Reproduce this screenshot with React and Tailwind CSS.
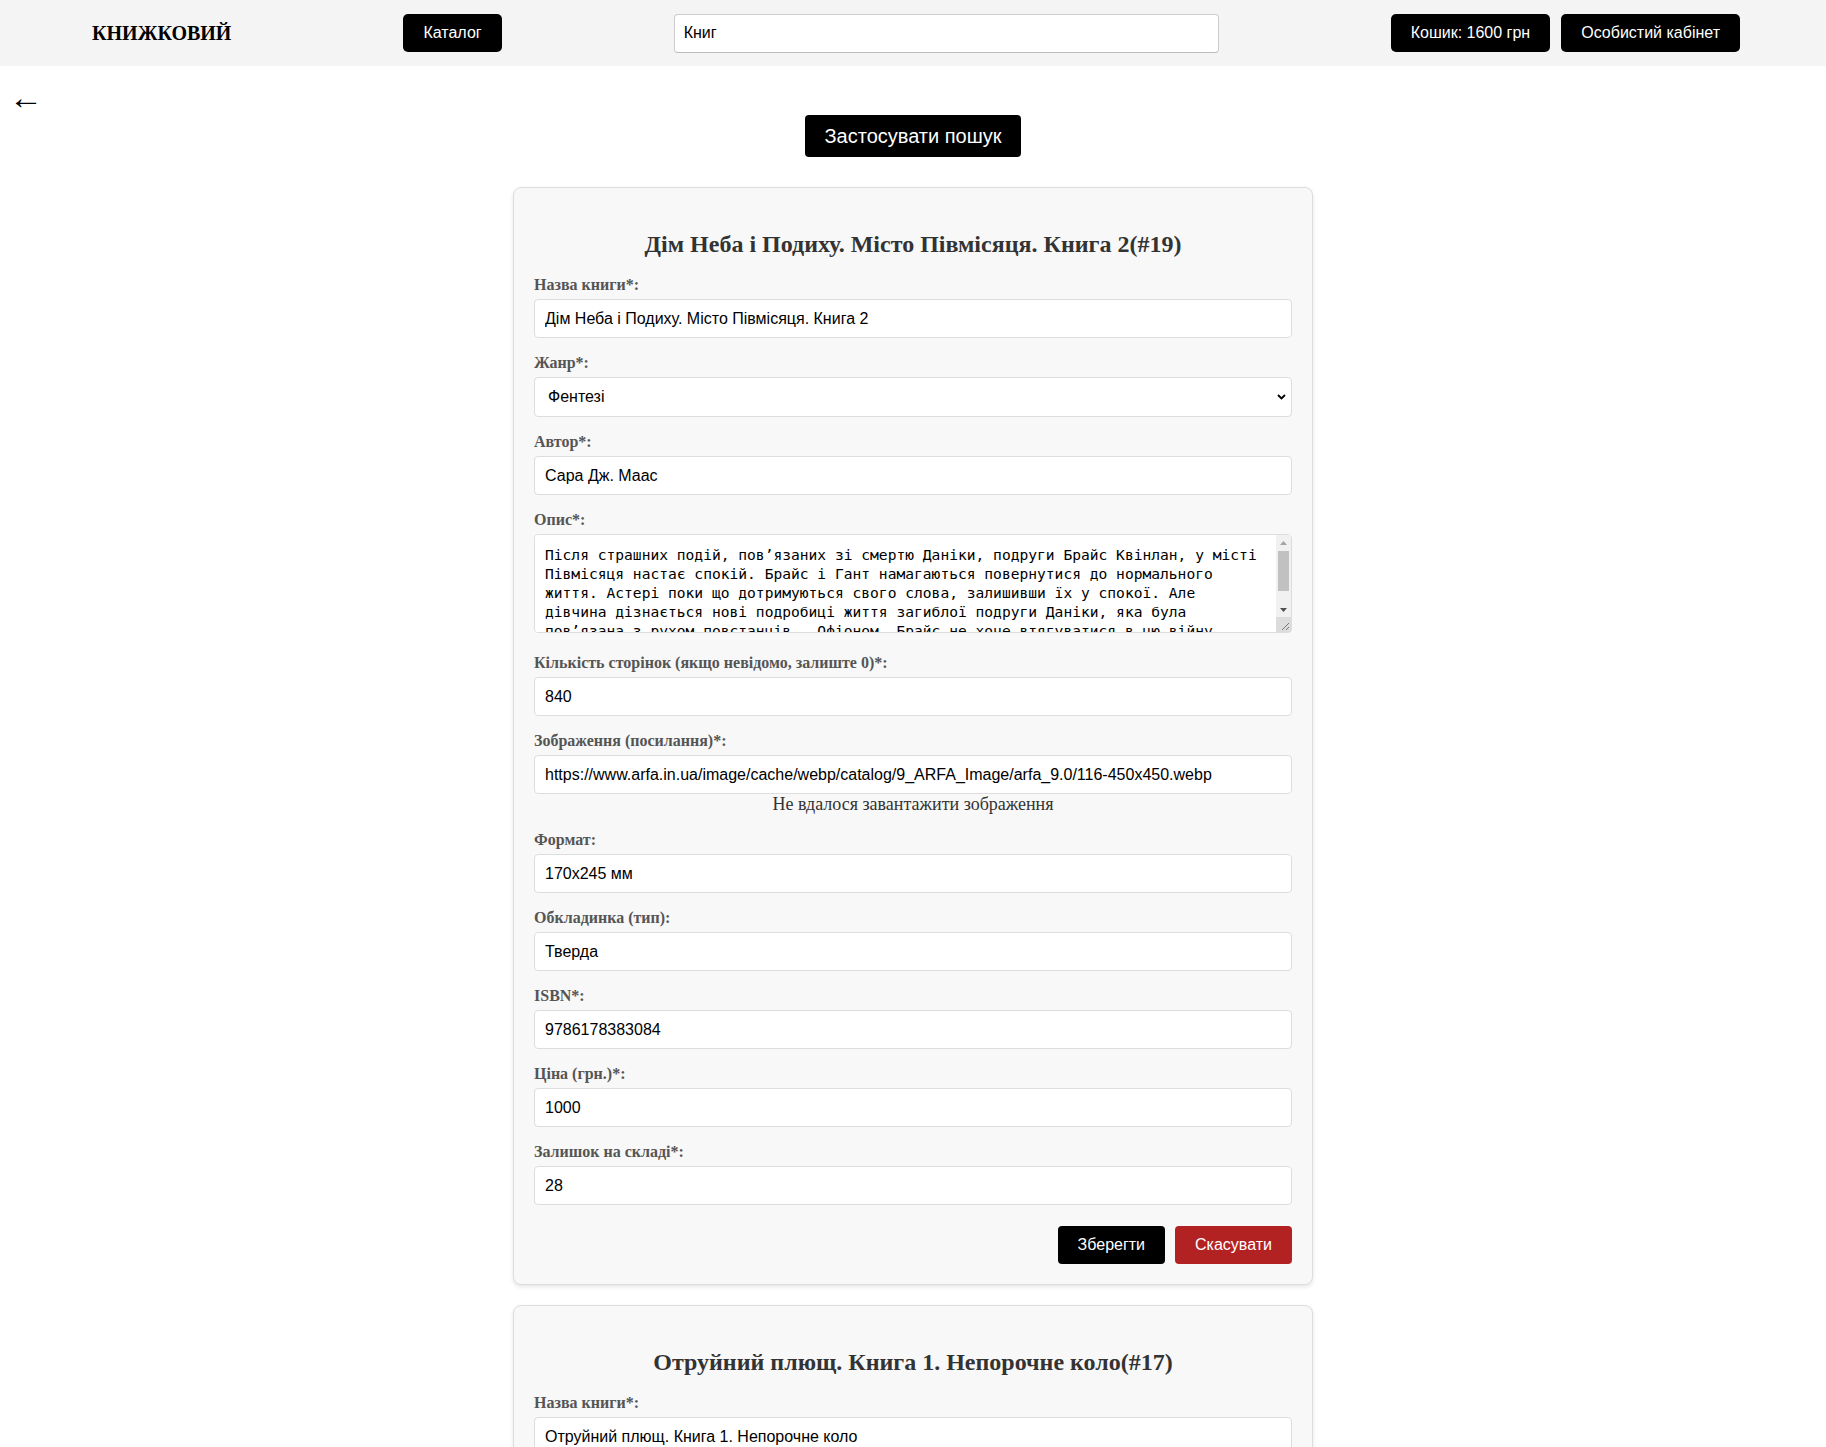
import { useState } from 'react';

const serif = "font-['Liberation_Serif','Times_New_Roman',serif]";
const sans = "font-['Liberation_Sans',Arial,sans-serif]";

const genres = ['Фентезі', 'Детектив', 'Роман', 'Трилер', 'Класика', 'Наукова фантастика'];

const books = [
  {
    id: 19,
    title: 'Дім Неба і Подиху. Місто Півмісяця. Книга 2',
    genre: 'Фентезі',
    author: 'Сара Дж. Маас',
    description:
      'Після страшних подій, пов’язаних зі смертю Даніки, подруги Брайс Квінлан, у місті Півмісяця настає спокій. Брайс і Гант намагаються повернутися до нормального життя. Астері поки що дотримуються свого слова, залишивши їх у спокої. Але дівчина дізнається нові подробиці життя загиблої подруги Даніки, яка була пов’язана з рухом повстанців — Офіоном. Брайс не хоче втягуватися в цю війну, проте минуле подруги не відпускає її, а місто знову опиняється на межі хаосу.',
    pages: '840',
    image: 'https://www.arfa.in.ua/image/cache/webp/catalog/9_ARFA_Image/arfa_9.0/116-450x450.webp',
    format: '170x245 мм',
    cover: 'Тверда',
    isbn: '9786178383084',
    price: '1000',
    stock: '28',
  },
  {
    id: 17,
    title: 'Отруйний плющ. Книга 1. Непорочне коло',
    genre: 'Роман',
    author: 'Л. Дж. Шен',
    description:
      'Перша книга циклу «Непорочне коло». Історія про кохання, помсту та таємниці, які ховаються за фасадом елітної школи.',
    pages: '416',
    image: 'https://www.arfa.in.ua/image/cache/webp/catalog/9_ARFA_Image/arfa_9.0/101-450x450.webp',
    format: '135x205 мм',
    cover: 'Тверда',
    isbn: '9786178383015',
    price: '600',
    stock: '12',
  },
];

const inputCls = `block w-full h-[39px] px-[10px] bg-white border border-[#ddd] rounded-[4px] text-[16px] text-black outline-none ${sans}`;
const labelCls = `block mb-[5px] text-[16px] leading-[18px] font-bold text-[#555] ${serif}`;

function Field({ label, children, last }) {
  return (
    <div className={last ? 'mb-[21px]' : 'mb-4'}>
      <label className={labelCls}>{label}</label>
      {children}
    </div>
  );
}

// classic scrollbar drawn over the textarea's right edge
function FakeScrollbar() {
  return (
    <div className="absolute top-px right-px bottom-px w-[15px] flex flex-col pointer-events-none">
      <div className="flex flex-col flex-1 bg-[#f1f1f1]">
        <div className="h-[15px] flex items-center justify-center">
          <svg width="7" height="4" viewBox="0 0 7 4">
            <path d="M0 4L3.5 0L7 4Z" fill="#a3a3a3" />
          </svg>
        </div>
        <div className="flex-1 px-[2px] pt-px">
          <div className="h-[40px] bg-[#c1c1c1]" />
        </div>
        <div className="h-[15px] flex items-center justify-center">
          <svg width="7" height="4" viewBox="0 0 7 4">
            <path d="M0 0L3.5 4L7 0Z" fill="#505050" />
          </svg>
        </div>
      </div>
      <div className="h-[15px] bg-[#dcdcdc] flex items-end justify-end">
        <svg width="15" height="15" viewBox="0 0 15 15">
          <path d="M13 6L6 13M13 10L10 13" stroke="#777" strokeWidth="1" />
        </svg>
      </div>
    </div>
  );
}

function BookCard({ book }) {
  const [form, setForm] = useState(book);
  const set = (key) => (e) => setForm({ ...form, [key]: e.target.value });

  return (
    <div className="w-[800px] mx-auto mb-5 p-5 bg-[#f8f8f8] border border-[#ddd] rounded-lg shadow-[0_2px_4px_rgba(0,0,0,0.1)]">
      <h2 className={`mt-[22px] mb-[18px] text-center text-[24px] leading-[28px] font-bold text-[#333] ${serif}`}>
        {book.title}(#{book.id})
      </h2>

      <Field label="Назва книги*:">
        <input className={inputCls} value={form.title} onChange={set('title')} />
      </Field>

      <Field label="Жанр*:">
        <div className="relative">
          <select
            className={`block w-full h-[40px] pl-[13px] pr-8 bg-white border border-[#ddd] rounded-[4px] text-[16px] text-black outline-none appearance-none ${sans}`}
            value={form.genre}
            onChange={set('genre')}
          >
            {genres.map((g) => (
              <option key={g}>{g}</option>
            ))}
          </select>
          <svg className="absolute right-[6px] top-[17px] pointer-events-none" width="9" height="6" viewBox="0 0 9 6">
            <path d="M1 1l3.5 3.5L8 1" fill="none" stroke="#000" strokeWidth="1.8" />
          </svg>
        </div>
      </Field>

      <Field label="Автор*:">
        <input className={inputCls} value={form.author} onChange={set('author')} />
      </Field>

      <Field label="Опис*:" last>
        <div className="relative">
          <textarea
            className="block w-full h-[99px] py-[10px] pl-[10px] pr-[28px] bg-white border border-[#ddd] rounded-[4px] text-[14.6px] leading-[19px] text-black outline-none resize-none overflow-y-auto [scrollbar-width:none] font-['DejaVu_Sans_Mono',monospace]"
            value={form.description}
            onChange={set('description')}
          />
          <FakeScrollbar />
        </div>
      </Field>

      <Field label="Кількість сторінок (якщо невідомо, залиште 0)*:">
        <input className={inputCls} value={form.pages} onChange={set('pages')} />
      </Field>

      <div className="mb-4">
        <label className={labelCls}>Зображення (посилання)*:</label>
        <input className={inputCls} value={form.image} onChange={set('image')} />
        <div className={`text-center text-[18px] leading-[21px] text-[#333] ${serif}`}>Не вдалося завантажити зображення</div>
      </div>

      <Field label="Формат:">
        <input className={inputCls} value={form.format} onChange={set('format')} />
      </Field>

      <Field label="Обкладинка (тип):">
        <input className={inputCls} value={form.cover} onChange={set('cover')} />
      </Field>

      <Field label="ISBN*:">
        <input className={inputCls} value={form.isbn} onChange={set('isbn')} />
      </Field>

      <Field label="Ціна (грн.)*:">
        <input className={inputCls} value={form.price} onChange={set('price')} />
      </Field>

      <Field label="Залишок на складі*:">
        <input className={inputCls} value={form.stock} onChange={set('stock')} />
      </Field>

      <div className={`flex justify-end gap-[10px] mt-[21px] ${sans}`}>
        <button className="h-[38px] px-5 bg-black text-white text-[16px] rounded-[4px]">Зберегти</button>
        <button className="h-[38px] px-5 bg-[#b22222] text-white text-[16px] rounded-[4px]">Скасувати</button>
      </div>
    </div>
  );
}

export default function App() {
  const [query, setQuery] = useState('Книг');

  return (
    <div className={`min-h-screen bg-white ${sans}`}>
      <header className="flex items-center justify-around h-[66px] pl-[6px] bg-[#f4f4f4]">
        <div className={`text-[20px] font-bold text-black ${serif}`}>КНИЖКОВИЙ</div>
        <button className="h-[38px] px-5 bg-black text-white text-[16px] rounded-[5px]">Каталог</button>
        <input
          className="w-[545px] h-[39px] px-[9px] bg-white border border-[#ccc] border-b-[#bbb] rounded-[4px] text-[16px] text-black outline-none"
          value={query}
          onChange={(e) => setQuery(e.target.value)}
        />
        <div className="flex gap-[11px]">
          <button className="h-[38px] px-5 bg-black text-white text-[16px] rounded-[5px]">Кошик: 1600 грн</button>
          <button className="h-[38px] px-5 bg-black text-white text-[16px] rounded-[5px]">Особистий кабінет</button>
        </div>
      </header>

      <div className="pt-[20px] pl-[9px]">
        <button className={`block text-[34px] leading-[24px] text-black ${serif}`}>←</button>
      </div>

      <div className="flex justify-center mt-[5px] mb-[30px]">
        <button className="h-[42px] px-5 bg-black text-white text-[20px] rounded-[4px]">Застосувати пошук</button>
      </div>

      {books.map((b) => (
        <BookCard key={b.id} book={b} />
      ))}
    </div>
  );
}
